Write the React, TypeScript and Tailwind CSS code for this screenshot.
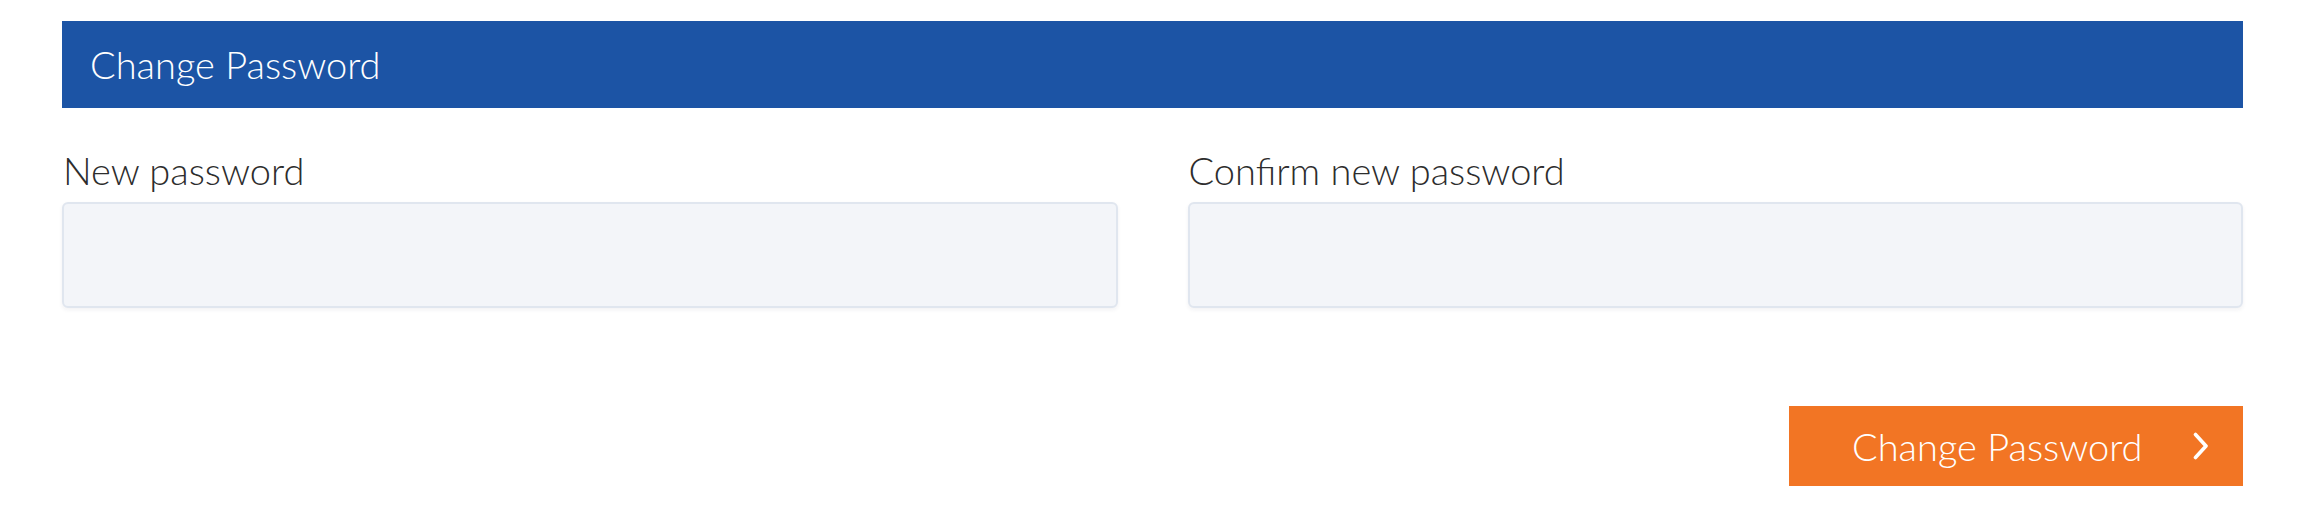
export default function App() {
  return (
    <div className="w-full h-[532px] bg-white pl-[62px] pr-[68px] pt-[21px] font-['Lato','Open_Sans',sans-serif] font-light">
      {/* panel title bar */}
      <div className="h-[87px] bg-[#1c54a5] flex items-center pl-[28px] pb-[2px]">
        <h2 className="text-[38px] leading-none text-white font-light">Change Password</h2>
      </div>

      <form className="mt-[38px]" onSubmit={(e) => e.preventDefault()}>
        <div className="grid grid-cols-2 gap-x-[70px]">
          <div>
            <label className="block text-[38px] leading-[48px] text-[#2d2d2d] mb-[8px] pl-[1px]">New password</label>
            <input
              type="password"
              className="block w-full h-[106px] bg-[#f3f5f9] border-2 border-[#e0e6ef] rounded-[6px] shadow-[0_2px_4px_rgba(30,40,60,0.06)] outline-none px-4"
            />
          </div>
          <div>
            <label className="block text-[38px] leading-[48px] text-[#2d2d2d] mb-[8px] pl-[1px]">Confirm new password</label>
            <input
              type="password"
              className="block w-full h-[106px] bg-[#f3f5f9] border-2 border-[#e0e6ef] rounded-[6px] shadow-[0_2px_4px_rgba(30,40,60,0.06)] outline-none px-4"
            />
          </div>
        </div>

        <div className="flex justify-end mt-[98px]">
          <button
            type="submit"
            className="w-[454px] h-[80px] bg-[#f27524] text-white flex items-center justify-between pl-[63px] pr-[34px]"
          >
            <span className="text-[38px] leading-none font-light">Change Password</span>
            <svg width="16" height="28" viewBox="0 0 16 28" fill="none">
              <path d="M2.5 2.5 L13 14 L2.5 25.5" stroke="white" strokeWidth="3.6" strokeLinecap="round" strokeLinejoin="round" />
            </svg>
          </button>
        </div>
      </form>
    </div>
  );
}
